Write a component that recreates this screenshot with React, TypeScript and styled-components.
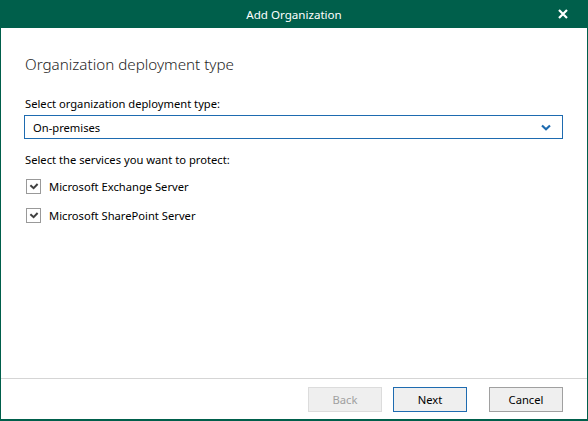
import styled, { createGlobalStyle } from 'styled-components'

const GlobalStyle = createGlobalStyle`
  html, body {
    margin: 0;
    padding: 0;
    background: #fff;
  }
  body {
    font-family: 'Noto Sans', 'Open Sans', sans-serif;
    font-size: 11.2px;
    color: #000;
  }
`

function CloseIcon() {
  return (
    <svg width="12" height="12" viewBox="0 0 12 12">
      <path d="M2 2 L10 10 M10 2 L2 10" stroke="#fff" strokeWidth="2.2" />
    </svg>
  )
}

function ChevronIcon() {
  return (
    <svg width="10" height="7" viewBox="0 0 10 7">
      <path d="M1 1.5 L5 5.2 L9 1.5" stroke="#1e6bb0" strokeWidth="2.2" fill="none" />
    </svg>
  )
}

function CheckIcon() {
  return (
    <svg width="10" height="8" viewBox="0 0 10 8">
      <path d="M1.4 3.2 L4.6 6.2 L8.6 2" stroke="#404040" strokeWidth="2" fill="none" />
    </svg>
  )
}

export default function App() {
  return (
    <>
      <GlobalStyle />
      <Window>
        <TitleBar>
          <Title>Add Organization</Title>
          <CloseButton>
            <CloseIcon />
          </CloseButton>
        </TitleBar>
        <Body>
          <Heading>Organization deployment type</Heading>
          <Label>Select organization deployment type:</Label>
          <Select>
            <span>On-premises</span>
            <ChevronIcon />
          </Select>
          <Label $top={12}>Select the services you want to protect:</Label>
          <CheckRow>
            <CheckBox>
              <CheckIcon />
            </CheckBox>
            Microsoft Exchange Server
          </CheckRow>
          <CheckRow>
            <CheckBox>
              <CheckIcon />
            </CheckBox>
            Microsoft SharePoint Server
          </CheckRow>
        </Body>
        <Footer>
          <Button $variant="disabled">Back</Button>
          <Button $variant="default">Next</Button>
          <Button $variant="normal" $gap={22}>Cancel</Button>
        </Footer>
      </Window>
    </>
  )
}

const Window = styled.div`
  display: flex;
  flex-direction: column;
  width: 588px;
  height: 421px;
  box-sizing: border-box;
  border: 1px solid #005f4b;
  border-top: none;
  border-bottom-width: 2px;
`

const TitleBar = styled.div`
  position: relative;
  height: 28px;
  margin: 0 -1px;
  background: #005f4b;
  display: flex;
  align-items: center;
  justify-content: center;
`

const Title = styled.div`
  color: #fff;
  font-size: 11.6px;
`

const CloseButton = styled.div`
  position: absolute;
  right: 19px;
  top: 8px;
  display: flex;
`

const Body = styled.div`
  flex: 1;
  display: flex;
  flex-direction: column;
  padding: 0 24px 0 23px;
`

const Heading = styled.div`
  margin-top: 25px;
  font-size: 15.2px;
  font-weight: 300;
  color: #262626;
  line-height: 22px;
  padding-left: 1px;
`

const Label = styled.div<{ $top?: number }>`
  margin-top: ${(p) => p.$top ?? 20}px;
  line-height: 17px;
  padding-left: 1px;
`

const Select = styled.div`
  margin-top: 3px;
  height: 24px;
  box-sizing: border-box;
  border: 1px solid #1e6bb0;
  display: flex;
  align-items: center;
  justify-content: space-between;
  padding: 0 11px 0 8px;
`

const CheckRow = styled.div`
  display: flex;
  align-items: center;
  gap: 8px;
  margin-top: 7px;
  height: 22px;
  padding-left: 2px;
`

const CheckBox = styled.div`
  width: 13px;
  height: 13px;
  border: 1px solid #999;
  display: flex;
  align-items: center;
  justify-content: center;
`

const Footer = styled.div`
  height: 41px;
  border-top: 1px solid #d5d5d5;
  display: flex;
  justify-content: flex-end;
  align-items: flex-start;
  padding: 8px 24px 0 0;
  box-sizing: border-box;
`

const Button = styled.div<{ $variant: 'disabled' | 'default' | 'normal'; $gap?: number }>`
  width: 74px;
  height: 25px;
  box-sizing: border-box;
  margin-left: ${(p) => p.$gap ?? 11}px;
  display: flex;
  align-items: center;
  justify-content: center;
  background: #efefef;
  border: 1px solid
    ${(p) => (p.$variant === 'disabled' ? '#dcdcdc' : p.$variant === 'default' ? '#1e6bb0' : '#a0a0a0')};
  color: ${(p) => (p.$variant === 'disabled' ? '#a0a0a0' : '#000')};
`
